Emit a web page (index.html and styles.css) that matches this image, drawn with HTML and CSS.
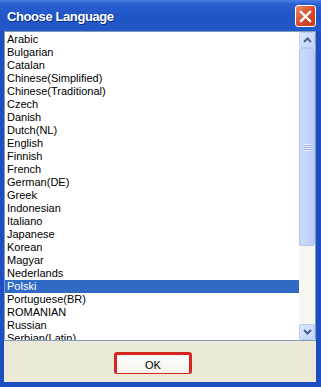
FILE: index.html
```html
<!DOCTYPE html>
<html lang="en">
<head>
    <meta charset="UTF-8">
    <title>Choose Language</title>
    <link rel="stylesheet" href="styles.css">
</head>
<body>
    <div class="window">
        <div class="titlebar">
            <span class="title">Choose Language</span>
            <button class="close" aria-label="Close">
                <svg width="13" height="13" viewBox="0 0 13 13">
                    <path d="M2 2 L11 11 M11 2 L2 11" stroke="#fff" stroke-width="2.4" stroke-linecap="square"/>
                </svg>
            </button>
        </div>
        <div class="client">
            <div class="listbox">
                <ul class="list">
                    <li>Arabic</li>
                    <li>Bulgarian</li>
                    <li>Catalan</li>
                    <li>Chinese(Simplified)</li>
                    <li>Chinese(Traditional)</li>
                    <li>Czech</li>
                    <li>Danish</li>
                    <li>Dutch(NL)</li>
                    <li>English</li>
                    <li>Finnish</li>
                    <li>French</li>
                    <li>German(DE)</li>
                    <li>Greek</li>
                    <li>Indonesian</li>
                    <li>Italiano</li>
                    <li>Japanese</li>
                    <li>Korean</li>
                    <li>Magyar</li>
                    <li>Nederlands</li>
                    <li class="selected">Polski</li>
                    <li>Portuguese(BR)</li>
                    <li>ROMANIAN</li>
                    <li>Russian</li>
                    <li>Serbian(Latin)</li>
                </ul>
                <div class="scrollbar">
                    <div class="arrow">
                        <svg width="9" height="6" viewBox="0 0 9 6"><path d="M1 5 L4.5 1.5 L8 5" fill="none" stroke="#4d6185" stroke-width="2"/></svg>
                    </div>
                    <div class="thumb"><span class="grip"></span></div>
                    <div class="track"></div>
                    <div class="arrow">
                        <svg width="9" height="6" viewBox="0 0 9 6"><path d="M1 1 L4.5 4.5 L8 1" fill="none" stroke="#4d6185" stroke-width="2"/></svg>
                    </div>
                </div>
            </div>
            <div class="footer">
                <div class="highlight">
                    <button class="ok">OK</button>
                </div>
            </div>
        </div>
    </div>
</body>
</html>
```

FILE: styles.css
```css
body {
    margin: 0;
    font-family: "Liberation Sans", Arial, sans-serif;
}
.window {
    width: 321px;
    height: 387px;
    display: flex;
    flex-direction: column;
    background: #1d4fc0;
    box-sizing: border-box;
}
.titlebar {
    height: 31px;
    flex: none;
    display: flex;
    align-items: center;
    justify-content: space-between;
    padding: 0 5px 0 7px;
    background: linear-gradient(#4a80e4 0, #2a5fd0 4px, #1f54c6 60%, #2459c9 100%);
}
.title {
    color: #fff;
    font-weight: bold;
    font-size: 13px;
    letter-spacing: -0.4px;
    text-shadow: 1px 1px 0 #0b2f84;
    margin-top: 2px;
}
.close {
    width: 21px;
    height: 22px;
    padding: 0;
    margin-top: 1px;
    border: 1px solid #fff;
    border-radius: 3px;
    background: linear-gradient(135deg, #ec8a66, #d6482a 55%, #c33a1e);
    display: flex;
    align-items: center;
    justify-content: center;
}
.client {
    flex: 1;
    margin: 0 5px 5px 4px;
    background: #ece9d8;
    display: flex;
    flex-direction: column;
}
.listbox {
    height: 310px;
    box-sizing: border-box;
    border: 1px solid #7f9db9;
    background: #fff;
    display: flex;
}
.list {
    flex: 1;
    list-style: none;
    margin: 0;
    padding: 1px 0 0 0;
    overflow: hidden;
}
.list li {
    height: 13px;
    line-height: 13px;
    padding-left: 2px;
    font-size: 11px;
    color: #000;
    white-space: nowrap;
}
.list li.selected {
    background: #316ac5;
    color: #fff;
}
.scrollbar {
    width: 16px;
    display: flex;
    flex-direction: column;
    background: #f7f6f1;
    padding-right: 0;
}
.arrow {
    height: 16px;
    box-sizing: border-box;
    border: 1px solid #b8cbf3;
    border-radius: 2px;
    background: linear-gradient(135deg, #dde7fd, #c2d3fa);
    display: flex;
    align-items: center;
    justify-content: center;
}
.thumb {
    height: 198px;
    box-sizing: border-box;
    border: 1px solid #b3c6f1;
    border-radius: 2px;
    background: linear-gradient(90deg, #cbdafc, #c3d4fb 60%, #b9cbf5);
    display: flex;
    align-items: center;
    justify-content: center;
}
.grip {
    width: 7px;
    height: 7px;
    background: repeating-linear-gradient(#eef3fe 0, #eef3fe 1px, #98ace0 1px, #98ace0 2px);
}
.track {
    flex: 1;
}
.footer {
    flex: 1;
    padding: 11px 0 0 110px;
}
.highlight {
    width: 78px;
    height: 22px;
    box-sizing: border-box;
    border: 3px solid #d4251f;
    border-radius: 3px;
    background: #f4f3ee;
}
.ok {
    width: 100%;
    height: 100%;
    margin: 0;
    padding: 0;
    border: none;
    background: linear-gradient(#fefefe, #f2f1ea);
    font-family: "Liberation Sans", Arial, sans-serif;
    font-size: 11px;
    color: #000;
}
```
